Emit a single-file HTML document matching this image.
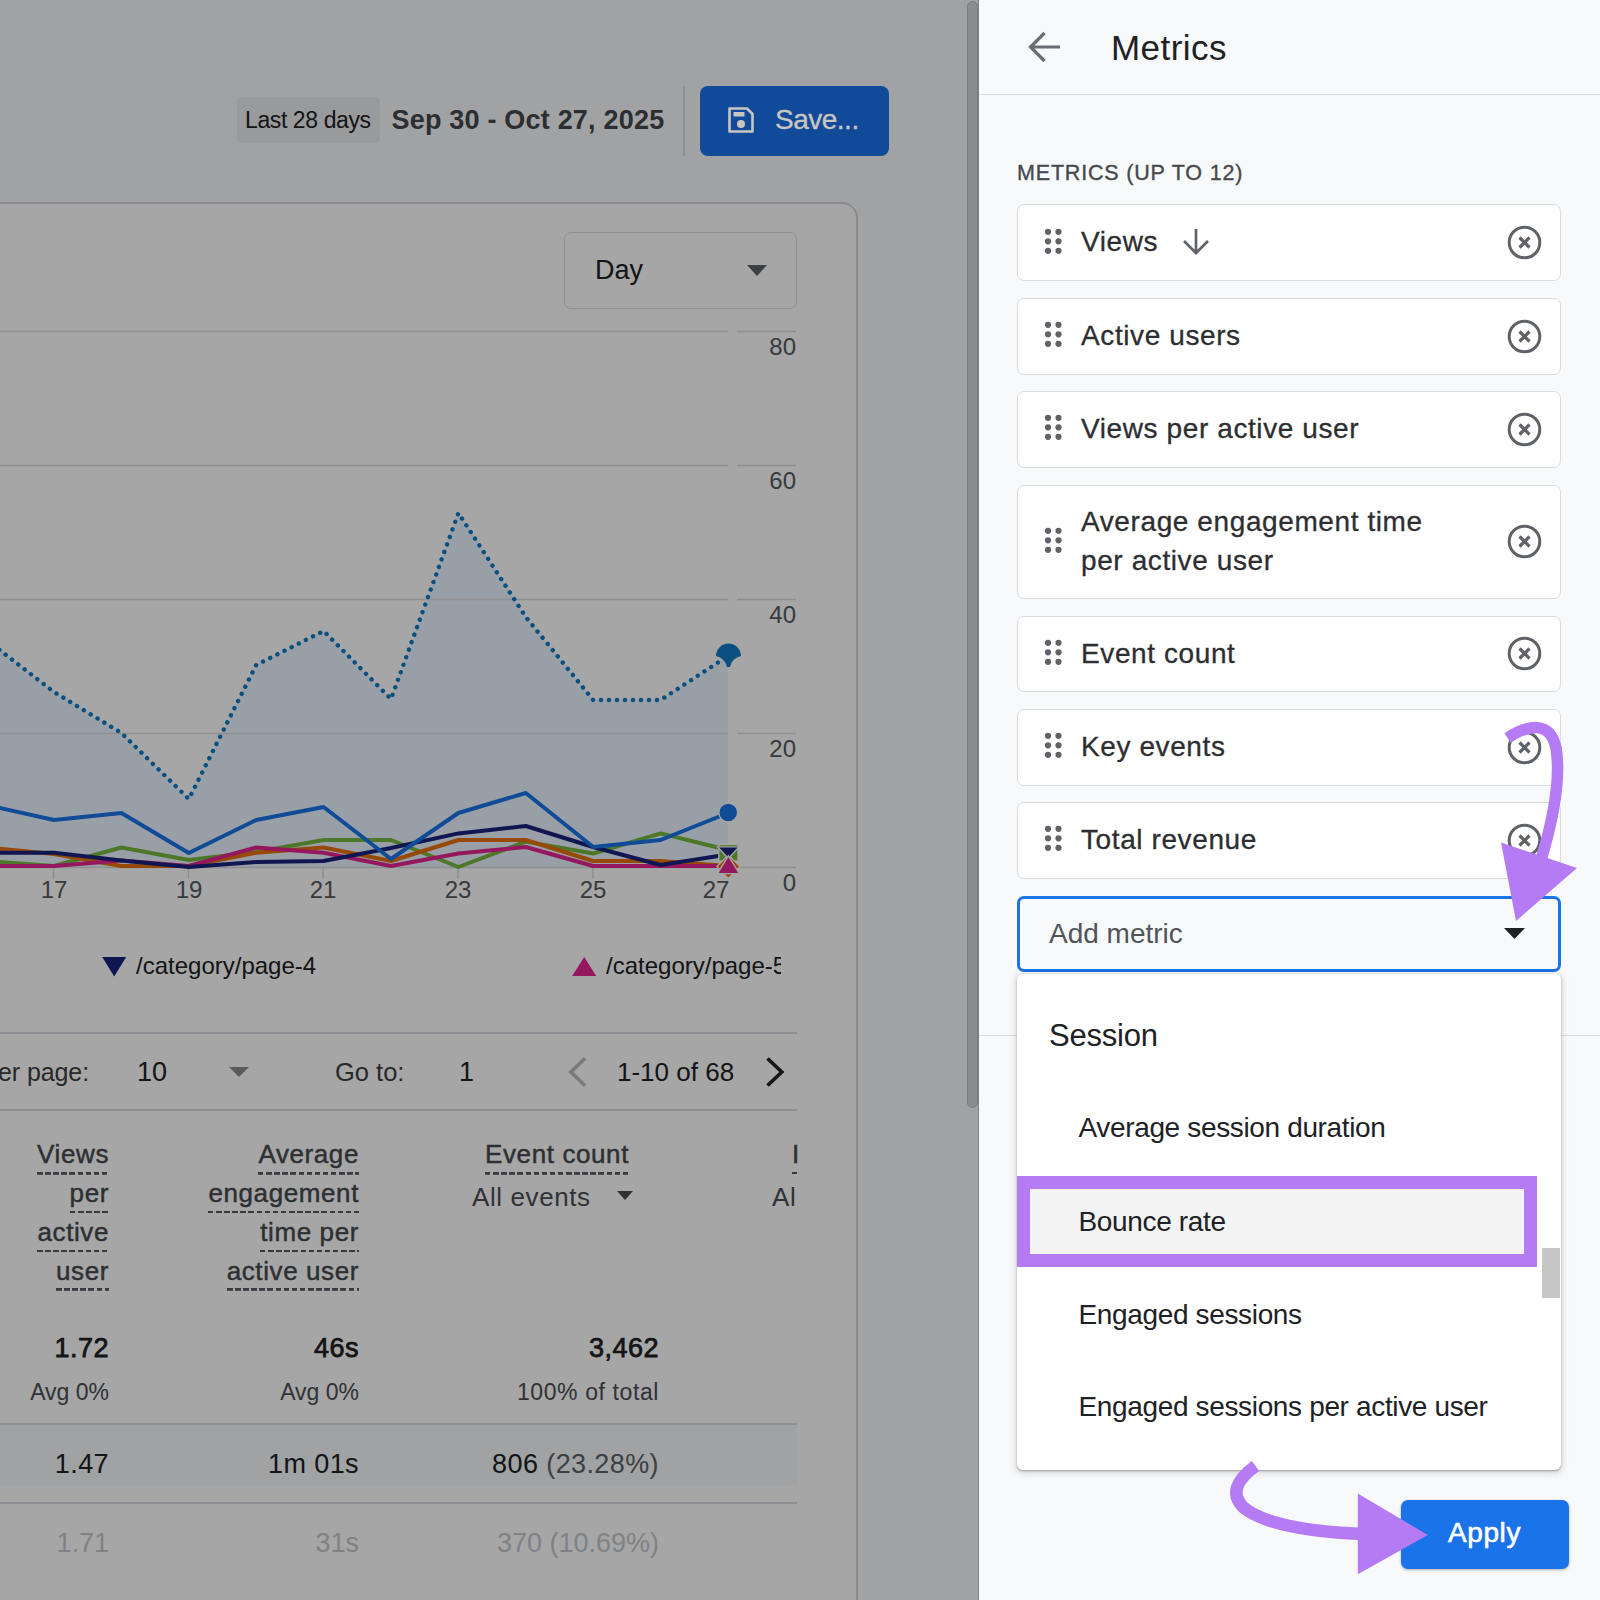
<!DOCTYPE html>
<html><head><meta charset="utf-8">
<style>
*{box-sizing:border-box;margin:0;padding:0}
html,body{width:1600px;height:1600px;overflow:hidden;background:#f8f9fa;font-family:"Liberation Sans",sans-serif;color:#202124}
.a{position:absolute;white-space:nowrap}
#left{position:absolute;left:0;top:0;width:979px;height:1600px;background:#f8f9fa;overflow:hidden}
#overlay{position:absolute;left:0;top:0;width:979px;height:1600px;background:rgba(0,0,0,0.35)}
#panel{position:absolute;left:979px;top:0;width:621px;height:1600px;background:#f8f9fa;overflow:hidden}
.row{position:absolute;left:38px;width:544px;background:#fff;border:1.5px solid #dadce0;border-radius:7px}
.lbl{position:absolute;left:63px;font-size:28px;color:#202124;letter-spacing:0.2px}
.drag{position:absolute;left:28px;width:16px;height:26px}
.xic{position:absolute;left:490px;width:34px;height:34px}
.hd{position:absolute;font-size:26px;color:#464a4f;text-align:right;line-height:38.9px;letter-spacing:0.6px;-webkit-text-stroke:0.45px #464a4f}
.hd span{padding-bottom:5.5px;background-image:repeating-linear-gradient(to right,#55595e 0 5.5px,transparent 5.5px 8.1px);background-size:100% 2.8px;background-position:0 100%;background-repeat:no-repeat}
.val{position:absolute;font-size:27px;text-align:right}
</style></head><body>
<div id="left">
  <!-- toolbar -->
  <div class="a" style="left:237px;top:97px;width:143px;height:46px;background:#ebedef;border-radius:5px"></div>
  <div class="a" style="left:245px;top:104px;font-size:23px;line-height:32px;letter-spacing:-0.4px;color:#202124">Last 28 days</div>
  <div class="a" style="left:391.5px;top:102px;font-size:27px;line-height:36px;font-weight:bold;letter-spacing:0.2px;color:#45484c">Sep 30 - Oct 27, 2025</div>
  <div class="a" style="left:683px;top:86px;width:1.5px;height:70px;background:#dadce0"></div>
  <div class="a" style="left:700px;top:86px;width:189px;height:70px;background:#1d72ed;border-radius:8px"></div>
  

  <!-- card -->
  <div class="a" style="left:-30px;top:202px;width:888px;height:1500px;background:#fff;border:2px solid #d3d5d9;border-radius:16px"></div>
  <div class="a" style="left:564px;top:232px;width:233px;height:77px;border:1.5px solid #dadce0;border-radius:7px"></div>
  <div class="a" style="left:595px;top:252px;font-size:27px;line-height:36px;color:#202124">Day</div>
  <svg class="a" style="left:746.5px;top:265px" width="22" height="12"><path d="M0 0 L20 0 L10 11 Z" fill="#5f6368"/></svg>

  <!-- chart -->
  <svg class="a" style="left:0;top:0" width="860" height="1000" viewBox="0 0 860 1000">
    
    <g font-family="Liberation Sans" font-size="24" fill="#55595e" text-anchor="end">
      <text x="796" y="355">80</text><text x="796" y="489">60</text><text x="796" y="623">40</text>
      <text x="796" y="757">20</text><text x="796" y="891">0</text>
    </g>
    <g font-family="Liberation Sans" font-size="24" fill="#55595e" text-anchor="middle">
      <text x="54" y="898">17</text><text x="189" y="898">19</text><text x="323" y="898">21</text>
      <text x="458" y="898">23</text><text x="593" y="898">25</text><text x="716" y="898">27</text>
    </g>
    <path fill="#eaf4ff" d="M-13.4 640L54.0 692L121.4 733L188.8 799L256.2 665L323.6 631L391.0 699L458.4 513L525.8 617L593.2 700L660.6 700L728.0 656L728 868L-13.4 868Z"/>
    <g stroke="#dadce0" stroke-width="1.5">
      <line x1="0" y1="331.5" x2="728" y2="331.5"/><line x1="737" y1="331.5" x2="796" y2="331.5"/>
      <line x1="0" y1="465.5" x2="728" y2="465.5"/><line x1="737" y1="465.5" x2="796" y2="465.5"/>
      <line x1="0" y1="599.5" x2="728" y2="599.5"/><line x1="737" y1="599.5" x2="796" y2="599.5"/>
      <line x1="0" y1="733.5" x2="728" y2="733.5"/><line x1="737" y1="733.5" x2="796" y2="733.5"/>
      <line x1="0" y1="867.5" x2="728" y2="867.5"/><line x1="737" y1="867.5" x2="796" y2="867.5"/>
      <line x1="53.5" y1="868" x2="53.5" y2="879"/><line x1="188.5" y1="868" x2="188.5" y2="879"/>
      <line x1="323" y1="868" x2="323" y2="879"/><line x1="458" y1="868" x2="458" y2="879"/>
      <line x1="593" y1="868" x2="593" y2="879"/><line x1="728" y1="868" x2="728" y2="879"/>
    </g>
    <g fill="none" stroke-width="4" stroke-linejoin="round">
      <path d="M-13.4 861L54.0 866L121.4 847.5L188.8 860L256.2 852L323.6 840L391.0 840L458.4 867L525.8 841.6L593.2 853.5L660.6 833.4L728.0 850" stroke="#78b83f"/>
      <path d="M-13.4 847.5L54.0 854L121.4 866L188.8 866L256.2 852.7L323.6 847.5L391.0 861L458.4 840L525.8 840L593.2 861L660.6 861L728.0 866" stroke="#e8710a"/>
      <path d="M-13.4 866L54.0 866L121.4 860.6L188.8 866L256.2 847.5L323.6 852.7L391.0 866L458.4 853.5L525.8 847L593.2 866L660.6 866L728.0 866" stroke="#e52592"/>
      <path d="M-13.4 852.7L54.0 852.7L121.4 860.6L188.8 867L256.2 862L323.6 861L391.0 848L458.4 833.4L525.8 826L593.2 847L660.6 865L728.0 854.6" stroke="#1a237e"/>
      <path d="M-13.4 805L54.0 820L121.4 813L188.8 853L256.2 820L323.6 807L391.0 859L458.4 813L525.8 793L593.2 847L660.6 840L728.0 813" stroke="#1a73e8"/>
      <path d="M-13.4 640L54.0 692L121.4 733L188.8 799L256.2 665L323.6 631L391.0 699L458.4 513L525.8 617L593.2 700L660.6 700L728.0 656" stroke="#0f7ac4" stroke-width="4.4" stroke-dasharray="0.1 7.9" stroke-linecap="round"/>
    </g>
    <circle cx="728.2" cy="812.5" r="9.4" fill="#1a73e8" stroke="#fff" stroke-width="1.3"/>
    <path d="M716 656 A12.5 12.5 0 0 1 741 656 Q732 658 730 667 L727 667 Q725 658 716 656 Z" fill="#0f7ac4"/>
    <g stroke="#fff" stroke-width="1.3">
    <rect x="718.8" y="844.5" width="19.2" height="16.5" fill="#78b83f"/>
    <path d="M728.4 855 L740 866.5 L728.4 878.5 L716.8 866.5 Z" fill="#e8710a"/>
    <path d="M717.5 846.8 L739.2 846.8 L728.4 858.5 Z" fill="#1a237e"/>
    <path d="M728.4 855.8 L739.4 873.6 L717.4 873.6 Z" fill="#e52592"/>
    </g>
  </svg>

  <!-- legend -->
  <svg class="a" style="left:102px;top:957px" width="26" height="22"><path d="M0.2 0 L24.2 0 L12.2 19.5 Z" fill="#1a237e"/></svg>
  <div class="a" style="left:136px;top:950px;font-size:24px;line-height:32px;color:#202124">/category/page-4</div>
  <svg class="a" style="left:572px;top:957px" width="26" height="22"><path d="M12.2 0 L24.2 19 L0.2 19 Z" fill="#e52592"/></svg>
  <div class="a" style="left:606px;top:950px;width:174.5px;overflow:hidden;font-size:24px;line-height:32px;color:#202124">/category/page-5</div>

  <div class="a" style="left:0;top:1032px;width:797px;height:1.5px;background:#dadce0"></div>
  <div class="a" style="right:890px;top:1056px;font-size:25px;line-height:32px;color:#3c4043;letter-spacing:-0.1px">per page:</div>
  <div class="a" style="left:137px;top:1055.5px;font-size:27px;line-height:32px;color:#202124">10</div>
  <svg class="a" style="left:229px;top:1067px" width="22" height="12"><path d="M0 0 L20 0 L10 10 Z" fill="#8a8c8f"/></svg>
  <div class="a" style="left:335px;top:1056px;font-size:25.5px;line-height:32px;color:#3c4043">Go to:</div>
  <div class="a" style="left:459px;top:1055.5px;font-size:27px;line-height:32px;color:#202124">1</div>
  <svg class="a" style="left:566px;top:1056px" width="22" height="32"><path d="M19 2.5 L4.8 16 L19 29.5" fill="none" stroke="#b8bcc0" stroke-width="3.6"/></svg>
  <div class="a" style="left:617px;top:1056px;font-size:26px;line-height:32px;color:#202124">1-10 of 68</div>
  <svg class="a" style="left:764px;top:1056px" width="22" height="32"><path d="M3.5 2.5 L17.8 16 L3.5 29.5" fill="none" stroke="#202124" stroke-width="3.6"/></svg>
  <div class="a" style="left:0;top:1109px;width:797px;height:1.5px;background:#dadce0"></div>

  <!-- headers -->
  <div class="hd" style="right:870px;top:1135px">
    <span>Views</span><br><span>per</span><br><span>active</span><br><span>user</span>
  </div>
  <div class="hd" style="right:620px;top:1135px">
    <span>Average</span><br><span>engagement</span><br><span>time per</span><br><span>active user</span>
  </div>
  <div class="hd" style="right:350px;top:1135px"><span>Event count</span></div>
  <div class="a" style="left:472px;top:1181px;font-size:26px;line-height:32px;letter-spacing:0.6px;color:#4a4e54">All events</div>
  <svg class="a" style="left:617px;top:1191px" width="18" height="10"><path d="M0 0 L16 0 L8 9 Z" fill="#4a4e54"/></svg>
  <div class="hd" style="left:792px;top:1135px;width:20px;overflow:hidden;text-align:left"><span>I</span></div>
  <div class="a" style="left:772px;top:1181px;width:23px;overflow:hidden;font-size:26px;line-height:32px;letter-spacing:0.6px;color:#4a4e54">All</div>

  <!-- totals -->
  <div class="val" style="right:870px;top:1330px;line-height:36px;letter-spacing:0.5px;-webkit-text-stroke:0.75px #202124">1.72</div>
  <div class="val" style="right:620px;top:1330px;line-height:36px;letter-spacing:0.5px;-webkit-text-stroke:0.75px #202124">46s</div>
  <div class="val" style="right:320px;top:1330px;line-height:36px;letter-spacing:0.5px;-webkit-text-stroke:0.75px #202124">3,462</div>
  <div class="val" style="right:870px;top:1376px;font-size:23px;color:#4a4d52;line-height:32px">Avg 0%</div>
  <div class="val" style="right:620px;top:1376px;font-size:23px;color:#4a4d52;line-height:32px">Avg 0%</div>
  <div class="val" style="right:320px;top:1376px;font-size:23px;color:#4a4d52;line-height:32px;letter-spacing:0.6px">100% of total</div>
  <div class="a" style="left:0;top:1423px;width:797px;height:1.5px;background:#dadce0"></div>
  <div class="a" style="left:0;top:1424.5px;width:797px;height:60px;background:#f8f9fa"></div>
  <div class="val" style="right:870px;top:1446px;line-height:36px;letter-spacing:0.4px">1.47</div>
  <div class="val" style="right:620px;top:1446px;line-height:36px;letter-spacing:0.4px">1m 01s</div>
  <div class="val" style="right:320px;top:1446px;line-height:36px;letter-spacing:0.4px">806 <span style="color:#5f6368">(23.28%)</span></div>
  <div class="a" style="left:0;top:1502px;width:797px;height:1.5px;background:#dadce0"></div>
  <div class="val" style="right:870px;top:1525px;line-height:36px;color:#c4c8cc">1.71</div>
  <div class="val" style="right:620px;top:1525px;line-height:36px;color:#c4c8cc">31s</div>
  <div class="val" style="right:320px;top:1525px;line-height:36px;color:#c4c8cc">370 (10.69%)</div>

  <div id="overlay"></div>
<svg class="a" style="left:726px;top:105px" width="30" height="30" viewBox="0 0 30 30">
    <path d="M3.5 3.5 H21 L26.5 9 V26.5 H3.5 Z" fill="none" stroke="#c9c6c1" stroke-width="2.6" stroke-linejoin="round"/>
    <rect x="7.5" y="7" width="11" height="4.5" fill="#c9c6c1"/>
    <circle cx="15" cy="19" r="4" fill="#c9c6c1"/>
  </svg>
  <div class="a" style="left:775px;top:102px;font-size:28px;line-height:36px;letter-spacing:-0.5px;-webkit-text-stroke:0.3px #c9c6c1;color:#c9c6c1">Save...</div>
<div class="a" style="left:978px;top:0;width:1px;height:1600px;background:#7d7e80"></div>
  <div class="a" style="left:966.5px;top:1px;width:11.5px;height:1107px;background:#8b8c8e;border:1px solid #7a7b7d;border-radius:6px"></div>
</div>

<div class="a" style="left:979px;top:0;width:621px;height:1600px;background:#f8f9fa"></div>
<svg class="a" style="left:1026px;top:28px" width="38" height="38" viewBox="0 0 38 38"><path d="M34 19 H4.5 M18.5 5 L4.5 19 L18.5 33" fill="none" stroke="#6a6d71" stroke-width="3.2"/></svg>
<div class="a" style="left:1111px;top:28px;font-size:35px;line-height:40px;letter-spacing:0.45px;color:#202124">Metrics</div>
<div class="a" style="left:979px;top:93.5px;width:621px;height:1.5px;background:#dadce0"></div>
<div class="a" style="left:1017px;top:158.5px;font-size:21.5px;line-height:28px;letter-spacing:0.82px;color:#45484d;-webkit-text-stroke:0.35px #45484d">METRICS (UP TO 12)</div>
<div class="a" style="left:1017px;top:204px;width:544px;height:77px;background:#fff;border:1.5px solid #dadce0;border-radius:7px"></div>
<svg class="a" style="left:1044px;top:222.5px" width="22" height="40"><g fill="#5f6368"><circle cx="4.0" cy="8.8" r="3.1"/><circle cx="4.0" cy="18.3" r="3.1"/><circle cx="4.0" cy="27.8" r="3.1"/><circle cx="14.5" cy="8.8" r="3.1"/><circle cx="14.5" cy="18.3" r="3.1"/><circle cx="14.5" cy="27.8" r="3.1"/></g></svg>
<svg class="a" style="left:1506px;top:224.0px" width="37" height="37" viewBox="0 0 37 37"><circle cx="18.5" cy="18.5" r="15.3" fill="none" stroke="#5f6368" stroke-width="3"/><path d="M13.5 13.5 L23.5 23.5 M23.5 13.5 L13.5 23.5" stroke="#5f6368" stroke-width="3.2"/></svg>
<div class="a" style="left:1081px;top:224.4px;font-size:28px;line-height:36px;letter-spacing:0.6px;-webkit-text-stroke:0.3px #2d2e31;color:#2d2e31">Views</div>
<svg class="a" style="left:1181px;top:226px" width="30" height="30" viewBox="0 0 30 30"><path d="M15 3 V26.5 M3 15 L15 27 L27 15" fill="none" stroke="#5f6368" stroke-width="2.7"/></svg>
<div class="a" style="left:1017px;top:297.5px;width:544px;height:77px;background:#fff;border:1.5px solid #dadce0;border-radius:7px"></div>
<svg class="a" style="left:1044px;top:316.0px" width="22" height="40"><g fill="#5f6368"><circle cx="4.0" cy="8.8" r="3.1"/><circle cx="4.0" cy="18.3" r="3.1"/><circle cx="4.0" cy="27.8" r="3.1"/><circle cx="14.5" cy="8.8" r="3.1"/><circle cx="14.5" cy="18.3" r="3.1"/><circle cx="14.5" cy="27.8" r="3.1"/></g></svg>
<svg class="a" style="left:1506px;top:317.5px" width="37" height="37" viewBox="0 0 37 37"><circle cx="18.5" cy="18.5" r="15.3" fill="none" stroke="#5f6368" stroke-width="3"/><path d="M13.5 13.5 L23.5 23.5 M23.5 13.5 L13.5 23.5" stroke="#5f6368" stroke-width="3.2"/></svg>
<div class="a" style="left:1081px;top:317.9px;font-size:28px;line-height:36px;letter-spacing:0.6px;-webkit-text-stroke:0.3px #2d2e31;color:#2d2e31">Active users</div>
<div class="a" style="left:1017px;top:391px;width:544px;height:76.5px;background:#fff;border:1.5px solid #dadce0;border-radius:7px"></div>
<svg class="a" style="left:1044px;top:409.2px" width="22" height="40"><g fill="#5f6368"><circle cx="4.0" cy="8.8" r="3.1"/><circle cx="4.0" cy="18.3" r="3.1"/><circle cx="4.0" cy="27.8" r="3.1"/><circle cx="14.5" cy="8.8" r="3.1"/><circle cx="14.5" cy="18.3" r="3.1"/><circle cx="14.5" cy="27.8" r="3.1"/></g></svg>
<svg class="a" style="left:1506px;top:410.8px" width="37" height="37" viewBox="0 0 37 37"><circle cx="18.5" cy="18.5" r="15.3" fill="none" stroke="#5f6368" stroke-width="3"/><path d="M13.5 13.5 L23.5 23.5 M23.5 13.5 L13.5 23.5" stroke="#5f6368" stroke-width="3.2"/></svg>
<div class="a" style="left:1081px;top:411.2px;font-size:28px;line-height:36px;letter-spacing:0.6px;-webkit-text-stroke:0.3px #2d2e31;color:#2d2e31">Views per active user</div>
<div class="a" style="left:1017px;top:484.5px;width:544px;height:114px;background:#fff;border:1.5px solid #dadce0;border-radius:7px"></div>
<svg class="a" style="left:1044px;top:521.5px" width="22" height="40"><g fill="#5f6368"><circle cx="4.0" cy="8.8" r="3.1"/><circle cx="4.0" cy="18.3" r="3.1"/><circle cx="4.0" cy="27.8" r="3.1"/><circle cx="14.5" cy="8.8" r="3.1"/><circle cx="14.5" cy="18.3" r="3.1"/><circle cx="14.5" cy="27.8" r="3.1"/></g></svg>
<svg class="a" style="left:1506px;top:523.0px" width="37" height="37" viewBox="0 0 37 37"><circle cx="18.5" cy="18.5" r="15.3" fill="none" stroke="#5f6368" stroke-width="3"/><path d="M13.5 13.5 L23.5 23.5 M23.5 13.5 L13.5 23.5" stroke="#5f6368" stroke-width="3.2"/></svg>
<div class="a" style="left:1081px;top:502.4px;font-size:28px;line-height:39px;letter-spacing:0.6px;-webkit-text-stroke:0.3px #2d2e31;color:#2d2e31">Average engagement time<br>per active user</div>
<div class="a" style="left:1017px;top:615.5px;width:544px;height:76.5px;background:#fff;border:1.5px solid #dadce0;border-radius:7px"></div>
<svg class="a" style="left:1044px;top:633.8px" width="22" height="40"><g fill="#5f6368"><circle cx="4.0" cy="8.8" r="3.1"/><circle cx="4.0" cy="18.3" r="3.1"/><circle cx="4.0" cy="27.8" r="3.1"/><circle cx="14.5" cy="8.8" r="3.1"/><circle cx="14.5" cy="18.3" r="3.1"/><circle cx="14.5" cy="27.8" r="3.1"/></g></svg>
<svg class="a" style="left:1506px;top:635.2px" width="37" height="37" viewBox="0 0 37 37"><circle cx="18.5" cy="18.5" r="15.3" fill="none" stroke="#5f6368" stroke-width="3"/><path d="M13.5 13.5 L23.5 23.5 M23.5 13.5 L13.5 23.5" stroke="#5f6368" stroke-width="3.2"/></svg>
<div class="a" style="left:1081px;top:635.6px;font-size:28px;line-height:36px;letter-spacing:0.6px;-webkit-text-stroke:0.3px #2d2e31;color:#2d2e31">Event count</div>
<div class="a" style="left:1017px;top:709px;width:544px;height:76.5px;background:#fff;border:1.5px solid #dadce0;border-radius:7px"></div>
<svg class="a" style="left:1044px;top:727.2px" width="22" height="40"><g fill="#5f6368"><circle cx="4.0" cy="8.8" r="3.1"/><circle cx="4.0" cy="18.3" r="3.1"/><circle cx="4.0" cy="27.8" r="3.1"/><circle cx="14.5" cy="8.8" r="3.1"/><circle cx="14.5" cy="18.3" r="3.1"/><circle cx="14.5" cy="27.8" r="3.1"/></g></svg>
<svg class="a" style="left:1506px;top:728.8px" width="37" height="37" viewBox="0 0 37 37"><circle cx="18.5" cy="18.5" r="15.3" fill="none" stroke="#5f6368" stroke-width="3"/><path d="M13.5 13.5 L23.5 23.5 M23.5 13.5 L13.5 23.5" stroke="#5f6368" stroke-width="3.2"/></svg>
<div class="a" style="left:1081px;top:729.1px;font-size:28px;line-height:36px;letter-spacing:0.6px;-webkit-text-stroke:0.3px #2d2e31;color:#2d2e31">Key events</div>
<div class="a" style="left:1017px;top:802px;width:544px;height:76.5px;background:#fff;border:1.5px solid #dadce0;border-radius:7px"></div>
<svg class="a" style="left:1044px;top:820.2px" width="22" height="40"><g fill="#5f6368"><circle cx="4.0" cy="8.8" r="3.1"/><circle cx="4.0" cy="18.3" r="3.1"/><circle cx="4.0" cy="27.8" r="3.1"/><circle cx="14.5" cy="8.8" r="3.1"/><circle cx="14.5" cy="18.3" r="3.1"/><circle cx="14.5" cy="27.8" r="3.1"/></g></svg>
<svg class="a" style="left:1506px;top:821.8px" width="37" height="37" viewBox="0 0 37 37"><circle cx="18.5" cy="18.5" r="15.3" fill="none" stroke="#5f6368" stroke-width="3"/><path d="M13.5 13.5 L23.5 23.5 M23.5 13.5 L13.5 23.5" stroke="#5f6368" stroke-width="3.2"/></svg>
<div class="a" style="left:1081px;top:822.1px;font-size:28px;line-height:36px;letter-spacing:0.6px;-webkit-text-stroke:0.3px #2d2e31;color:#2d2e31">Total revenue</div>
<div class="a" style="left:979px;top:1034.5px;width:621px;height:1.5px;background:#dadce0"></div>
<div class="a" style="left:1017px;top:895.5px;width:544px;height:76px;border:3px solid #1a73e8;border-radius:7px"></div>
<div class="a" style="left:1049px;top:915.5px;font-size:28px;line-height:36px;color:#50545a">Add metric</div>
<svg class="a" style="left:1504px;top:928px" width="22" height="12"><path d="M0 0 L21 0 L10.5 11 Z" fill="#202124"/></svg>
<div class="a" style="left:1017px;top:974px;width:544px;height:496px;background:#fff;border-radius:5px 5px 6px 6px;box-shadow:0 1px 2px rgba(0,0,0,0.3),0 2px 6px 2px rgba(0,0,0,0.12)"></div>
<div class="a" style="left:1049px;top:1016px;font-size:31px;line-height:40px;letter-spacing:-0.2px;color:#202124">Session</div>
<div class="a" style="left:1017px;top:1176px;width:520px;height:91px;background:#f3f3f3"></div>
<div class="a" style="left:1078.5px;top:1110.3px;font-size:28px;line-height:36px;letter-spacing:-0.35px;color:#202124">Average session duration</div>
<div class="a" style="left:1078.5px;top:1203.8px;font-size:28px;line-height:36px;letter-spacing:-0.35px;color:#202124">Bounce rate</div>
<div class="a" style="left:1078.5px;top:1296.8px;font-size:28px;line-height:36px;letter-spacing:-0.35px;color:#202124">Engaged sessions</div>
<div class="a" style="left:1078.5px;top:1389.3px;font-size:28px;line-height:36px;letter-spacing:-0.35px;color:#202124">Engaged sessions per active user</div>
<div class="a" style="left:1542px;top:1247.5px;width:18px;height:50px;background:#c6c6c6"></div>
<div class="a" style="left:1017px;top:1175.5px;width:520px;height:91px;border:13px solid #b47bf4"></div>
<div class="a" style="left:1401px;top:1499.5px;width:168px;height:69px;background:#1a73e8;border-radius:7px;box-shadow:0 1px 3px rgba(0,0,0,0.3)"></div>
<div class="a" style="left:1448px;top:1515px;font-size:28px;line-height:36px;letter-spacing:0.6px;-webkit-text-stroke:0.6px #fff;color:#fff">Apply</div>
<svg class="a" style="left:0;top:0" width="1600" height="1600" viewBox="0 0 1600 1600"><g fill="#b47bf4"><path d="M1507.5 738 C1528 725, 1550 720, 1556 748 C1560 772, 1556 810, 1541 860" fill="none" stroke="#b47bf4" stroke-width="11.5"/><path d="M1501 842.5 L1577 868 L1516 921 Z"/><path d="M1255.5 1466 Q1225 1488 1243 1507 Q1270 1530 1362 1534" fill="none" stroke="#b47bf4" stroke-width="12.5"/><path d="M1357.8 1493.4 L1427.8 1535 L1357.8 1574.2 Z"/></g></svg>


</body></html>
